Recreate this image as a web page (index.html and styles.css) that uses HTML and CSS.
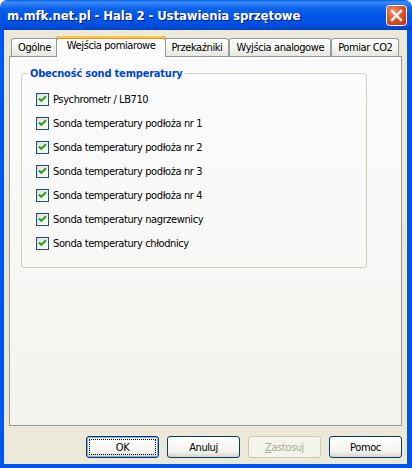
FILE: index.html
```html
<!DOCTYPE html>
<html lang="pl">
<head>
    <meta charset="UTF-8">
    <title>Ustawienia sprzętowe</title>
    <link rel="stylesheet" href="styles.css">
</head>
<body>
<div class="window">
    <div class="titlebar">
        <span class="title">m.mfk.net.pl - Hala 2 - Ustawienia sprzętowe</span>
        <div class="close">
            <svg width="21" height="21" viewBox="0 0 21 21">
                <defs>
                    <radialGradient id="red" cx="35%" cy="30%" r="80%">
                        <stop offset="0" stop-color="#f39a7a"/>
                        <stop offset="0.45" stop-color="#e35b32"/>
                        <stop offset="1" stop-color="#c43512"/>
                    </radialGradient>
                </defs>
                <rect x="0.5" y="0.5" width="20" height="20" rx="3" fill="url(#red)" stroke="#fff"/>
                <path d="M6 6 L15 15 M15 6 L6 15" stroke="#fff" stroke-width="2.4" stroke-linecap="square"/>
            </svg>
        </div>
    </div>
    <div class="frame">
        <div class="tabs">
            <div class="tab">Ogólne</div>
            <div class="tab active">Wejścia pomiarowe</div>
            <div class="tab">Przekaźniki</div>
            <div class="tab">Wyjścia analogowe</div>
            <div class="tab">Pomiar CO2</div>
        </div>
        <div class="panel">
            <fieldset class="group">
                <legend>Obecność sond temperatury</legend>
                <label class="check"><span class="box"><svg width="11" height="11" viewBox="0 0 11 11"><path d="M2 4.5 L4.3 6.8 L9 2.2" fill="none" stroke="#21a121" stroke-width="2"/></svg></span>Psychrometr / LB710</label>
                <label class="check"><span class="box"><svg width="11" height="11" viewBox="0 0 11 11"><path d="M2 4.5 L4.3 6.8 L9 2.2" fill="none" stroke="#21a121" stroke-width="2"/></svg></span>Sonda temperatury podłoża nr 1</label>
                <label class="check"><span class="box"><svg width="11" height="11" viewBox="0 0 11 11"><path d="M2 4.5 L4.3 6.8 L9 2.2" fill="none" stroke="#21a121" stroke-width="2"/></svg></span>Sonda temperatury podłoża nr 2</label>
                <label class="check"><span class="box"><svg width="11" height="11" viewBox="0 0 11 11"><path d="M2 4.5 L4.3 6.8 L9 2.2" fill="none" stroke="#21a121" stroke-width="2"/></svg></span>Sonda temperatury podłoża nr 3</label>
                <label class="check"><span class="box"><svg width="11" height="11" viewBox="0 0 11 11"><path d="M2 4.5 L4.3 6.8 L9 2.2" fill="none" stroke="#21a121" stroke-width="2"/></svg></span>Sonda temperatury podłoża nr 4</label>
                <label class="check"><span class="box"><svg width="11" height="11" viewBox="0 0 11 11"><path d="M2 4.5 L4.3 6.8 L9 2.2" fill="none" stroke="#21a121" stroke-width="2"/></svg></span>Sonda temperatury nagrzewnicy</label>
                <label class="check"><span class="box"><svg width="11" height="11" viewBox="0 0 11 11"><path d="M2 4.5 L4.3 6.8 L9 2.2" fill="none" stroke="#21a121" stroke-width="2"/></svg></span>Sonda temperatury chłodnicy</label>
            </fieldset>
        </div>
        <div class="buttons">
            <button class="btn default"><span>OK</span></button>
            <button class="btn"><span>Anuluj</span></button>
            <button class="btn disabled"><span><u>Z</u>astosuj</span></button>
            <button class="btn"><span>Pomoc</span></button>
        </div>
    </div>
</div>
</body>
</html>
```

FILE: styles.css
```css
*{
    margin:0;
    padding:0;
    box-sizing:border-box;
}
body{
    background-color:#ffffff;
    font-family:"DejaVu Sans Condensed","Liberation Sans",sans-serif;
    font-size:11px;
    letter-spacing:-0.4px;
    color:#000;
}
.window{
    width:412px;
    height:468px;
    display:flex;
    flex-direction:column;
}
.titlebar{
    height:30px;
    flex:none;
    display:flex;
    align-items:center;
    justify-content:space-between;
    padding:0 5px 0 7px;
    background:linear-gradient(to bottom,#0058ee 0,#3d8ff5 2px,#2a7cf4 4px,#0a62ec 9px,#0056e8 16px,#0052e4 24px,#0044cc 29px,#0040c2 30px);
    border-radius:7px 7px 0 0;
}
.title{
    color:#fff;
    font-weight:bold;
    font-size:13px;
    letter-spacing:-0.1px;
    text-shadow:1px 1px 0 #0a1883;
    padding-top:1px;
}
.close{
    width:21px;
    height:21px;
    display:flex;
}
.frame{
    flex:1;
    display:flex;
    flex-direction:column;
    background-color:#ece9d8;
    border:4px solid #0055ea;
    border-top:none;
    border-right-width:5px;
    padding:6px 5px 0 5px;
}
.tabs{
    height:20px;
    flex:none;
    display:flex;
    align-items:flex-end;
    padding-left:2px;
}
.tab{
    flex:none;
    height:18px;
    padding:0 6px;
    display:flex;
    align-items:center;
    white-space:nowrap;
    border:1px solid #919b9c;
    border-bottom:none;
    border-radius:3px 3px 0 0;
    background:linear-gradient(to bottom,#ffffff,#f3f3ef 60%,#e7e6df);
}
.tab.active{
    height:21px;
    margin:0 -2px -1px;
    padding:0 10px 2px;
    position:relative;
    z-index:1;
    border-top:none;
    background:#fcfcfe;
    box-shadow:inset 0 2px 0 #ffc83c, inset 0 3px 0 #e68b2c;
}
.panel{
    flex:1;
    border:1px solid #919b9c;
    background:linear-gradient(to bottom,#fcfcfe,#f4f3ee);
    padding:10px 34px 0 11px;
}
.group{
    border:1px solid #d0d0bf;
    border-radius:3px;
    padding:7px 10px 12px 14px;
    margin:0;
}
.group legend{
    color:#0046d5;
    font-weight:bold;
    font-size:11px;
    line-height:13px;
    letter-spacing:-0.2px;
    padding:0 2px;
    margin-left:-8px;
}
.check{
    height:24px;
    display:flex;
    align-items:center;
}
.box{
    width:13px;
    height:13px;
    margin-right:4px;
    border:1px solid #1c5180;
    background:linear-gradient(135deg,#dcdcd7,#ffffff);
    display:flex;
    align-items:center;
    justify-content:center;
}
.buttons{
    flex:none;
    display:flex;
    justify-content:flex-end;
    gap:8px;
    padding:10px 0 6px;
}
.btn{
    width:73px;
    height:22px;
    border:1px solid #003c74;
    border-radius:3px;
    background:linear-gradient(to bottom,#ffffff,#f4f4f0 70%,#e3e0d6 90%,#d6d0c5);
    font-family:inherit;
    font-size:11px;
    letter-spacing:inherit;
    color:#000;
    display:flex;
    padding:2px;
}
.btn span{
    flex:1;
    display:flex;
    align-items:center;
    justify-content:center;
    border:1px solid transparent;
}
.btn.default{
    box-shadow:inset 0 0 0 1px #8ca9e8;
}
.btn.default span{
    border:1px dotted #000;
}
.btn.disabled{
    border-color:#c9c7ba;
    background:#f5f4ea;
    color:#aca899;
}
```
